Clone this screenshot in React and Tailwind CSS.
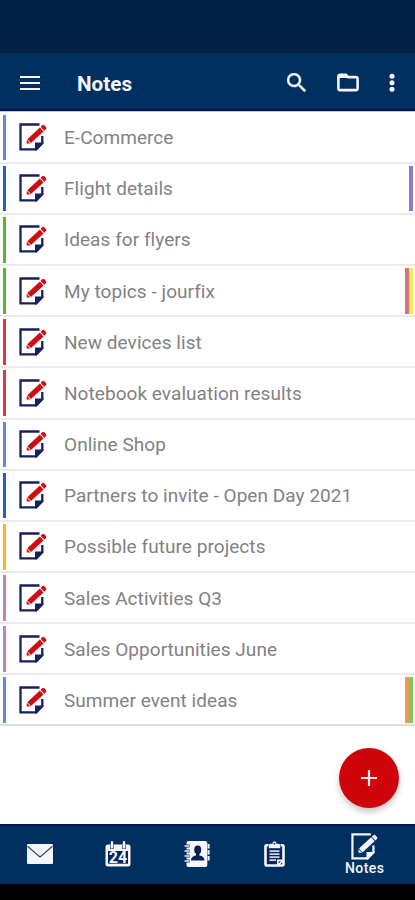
const notes = [
  { title: 'E-Commerce', color: 'bg-[#5b8fd0]' },
  { title: 'Flight details', color: 'bg-[#1f66b8]', tags: ['bg-[#8c7bd0]'] },
  { title: 'Ideas for flyers', color: 'bg-[#52bd1c]' },
  { title: 'My topics - jourfix', color: 'bg-[#52bd1c]', tags: ['bg-[#cf7480]', 'bg-[#f6ea50]'] },
  { title: 'New devices list', color: 'bg-[#e03545]' },
  { title: 'Notebook evaluation results', color: 'bg-[#e03545]' },
  { title: 'Online Shop', color: 'bg-[#5b8fd0]' },
  { title: 'Partners to invite - Open Day 2021', color: 'bg-[#1f66b8]' },
  { title: 'Possible future projects', color: 'bg-[#f8b81c]' },
  { title: 'Sales Activities Q3', color: 'bg-[#c283b6]' },
  { title: 'Sales Opportunities June', color: 'bg-[#c283b6]' },
  { title: 'Summer event ideas', color: 'bg-[#5b8fd0]', tags: ['bg-[#ef9a4e]', 'bg-[#78c95c]'] },
];

function NoteIcon({ paper, pencil, className }) {
  return (
    <svg viewBox="0 0 28 28" className={className}>
      <path d="M20.5 1.5H1.5V26.3H17L23.3 20V13" fill="none" stroke={paper} strokeWidth="2.3" />
      <path d="M16 27.4V19.6H24.4V20.5L17.7 27.4Z" fill={paper} />
      <g transform="translate(7.7 20.4) rotate(-43)" fill={pencil}>
        <path d="M0 0L2.6-2.6V2.6Z" />
        <rect x="3.3" y="-2.7" width="17.2" height="5.4" />
        <path d="M21.5-2.7H23.7Q25.2-2.7 25.2-1.2V1.2Q25.2 2.7 23.7 2.7H21.5Z" />
      </g>
    </svg>
  );
}

function Header() {
  return (
    <header className="flex h-[58px] shrink-0 items-center border-b-2 border-[#07125a] bg-[#003060] pt-1 text-[#f4f4fb]">
      <svg viewBox="0 0 20 14" className="ml-5 h-[14px] w-5" fill="currentColor">
        <path d="M0 0H20V2H0ZM0 6H20V8H0ZM0 12H20V14H0Z" />
      </svg>
      <h1 className="ml-[37px] pt-[2px] text-[20.7px] leading-6 font-bold">Notes</h1>
      <svg viewBox="3 3 17.49 17.49" className="mb-[2px] ml-auto h-[19px] w-[19px]" fill="currentColor" stroke="currentColor" strokeWidth=".4">
        <path d="M15.5 14h-.79l-.28-.27A6.47 6.47 0 0 0 16 9.5 6.5 6.5 0 1 0 9.5 16c1.61 0 3.09-.59 4.23-1.57l.27.28v.79l5 4.99L20.49 19l-4.99-5zm-6 0C7.01 14 5 11.99 5 9.5S7.01 5 9.5 5 14 7.01 14 9.5 11.99 14 9.5 14z" />
      </svg>
      <svg viewBox="0 0 22 18" className="mb-px ml-[31px] h-[19px] w-[22px]">
        <path d="M1.4 3V15Q1.4 16.6 3 16.6H19Q20.6 16.6 20.6 15V5Q20.6 3.6 19 3.6H11L9 1.4H3Q1.4 1.4 1.4 3Z" fill="none" stroke="currentColor" strokeWidth="2.6" />
        <path d="M2 1H9L11 4.5H2Z" fill="currentColor" />
      </svg>
      <svg viewBox="0 0 6 20" className="mr-5 ml-[30px] h-5 w-[6px]" fill="currentColor">
        <circle cx="3" cy="3.2" r="2.5" />
        <circle cx="3" cy="9.7" r="2.5" />
        <circle cx="3" cy="16.2" r="2.5" />
      </svg>
    </header>
  );
}

function NoteRow({ title, color, tags = [] }) {
  return (
    <li className="flex h-[51.17px] items-stretch border-b-2 border-[#ebebeb] pt-[2px] pr-[2px] pb-[1.5px] pl-[3px] last:border-[#dedede]">
      <span className={`w-[3px] ${color}`} />
      <NoteIcon paper="#16205f" pencil="#cf0c12" className="mt-[8.5px] ml-[13px] h-7 w-7" />
      <span className="ml-[17px] self-center pt-[1.5px] text-[19px] leading-6 font-normal tracking-[0.055px] whitespace-nowrap text-[#828282]">{title}</span>
      <span className="ml-auto flex">
        {tags.map((tag) => (
          <span key={tag} className={`w-1 ${tag}`} />
        ))}
      </span>
    </li>
  );
}

function CalendarIcon() {
  return (
    <svg viewBox="0 0 26 26" className="h-[26px] w-[26px]">
      <path d="M3 3.5H23Q25.5 3.5 25.5 6V23Q25.5 25.5 23 25.5H3Q.5 25.5 .5 23V6Q.5 3.5 3 3.5Z" fill="#f5f5fc" />
      <rect x="3" y="10" width="20" height="12.7" fill="#0b2358" />
      <path d="M7 3.5V8M19 3.5V8" stroke="#49608c" strokeWidth="4" />
      <path d="M7 1.2V6.3M19 1.2V6.3" stroke="#f5f5fc" strokeWidth="2.4" strokeLinecap="round" />
      <text x="13" y="22" textAnchor="middle" fontFamily="Roboto" fontSize="16" fontWeight="700" fill="#f5f5fc">24</text>
    </svg>
  );
}

function ContactsIcon() {
  return (
    <svg viewBox="0 0 26 26" className="h-[26px] w-[26px]">
      <rect x="2.5" y="0" width="20.8" height="26" rx="2" fill="#f5f5fc" />
      <path d="M0 5H5.5M0 10H5.5M0 15H5.5M0 20H5.5" stroke="#0b2358" strokeWidth="3" />
      <path d="M.5 5H5M.5 10H5M.5 15H5M.5 20H5" stroke="#f5f5fc" strokeWidth="1.7" />
      <path d="M24.6 3V7.4M24.6 9V13.4M24.6 15V19.4" stroke="#f5f5fc" strokeWidth="2" />
      <ellipse cx="13.7" cy="8.8" rx="3.5" ry="4.4" fill="#062250" />
      <path d="M12 12H15.4V14.5Q20.5 15.3 20.5 19.5H7Q7 15.3 12 14.5Z" fill="#062250" />
    </svg>
  );
}

function TasksIcon() {
  return (
    <svg viewBox="0 0 21 26" className="h-[26px] w-[21px]">
      <rect x="1.5" y="4.3" width="18" height="20.2" rx="1" fill="#0b2358" stroke="#f5f5fc" strokeWidth="2.6" />
      <path d="M4.5 7.5V4Q4.5 2.5 7 2.5H8.3Q8.5 0 10.5 0T12.7 2.5H14Q16.5 2.5 16.5 4V7.5Z" fill="#f5f5fc" stroke="#003060" strokeWidth=".6" />
      <circle cx="10.5" cy="2.7" r=".9" fill="#003060" />
      <path d="M5.5 10.2H15.5M5.5 13.2H15.5M5.5 16.2H15.5M5.5 19.2H12" stroke="#cdd4e4" strokeWidth="1.7" />
      <path d="M13 24.5V18.5H19.5V20L15 24.5Z" fill="#f5f5fc" />
      <path d="M14.6 22.5V20.2H17Z" fill="#0b2358" />
    </svg>
  );
}

function BottomNav() {
  return (
    <nav className="flex h-[60px] shrink-0 items-center border-t-2 border-[#0a1558] bg-[#003060] pl-[27px] text-[#f5f5fc]">
      <svg viewBox="0 0 26 20" className="mb-[2px] h-5 w-[26px]">
        <rect width="26" height="20" rx="1" fill="currentColor" />
        <path d="M.5 2.2L13 13L25.5 2.2" fill="none" stroke="#304678" strokeWidth="1.2" />
      </svg>
      <div className="mb-[2px] ml-[52px]"><CalendarIcon /></div>
      <div className="mb-[2px] ml-[53px]"><ContactsIcon /></div>
      <div className="mb-[2px] ml-[54px]"><TasksIcon /></div>
      <div className="mb-[2px] ml-[60px] flex flex-col items-center">
        <NoteIcon paper="#f5f5fc" pencil="#f5f5fc" className="h-[27px] w-[27px]" />
        <span className="text-[14px] leading-4 font-medium tracking-[0.4px]">Notes</span>
      </div>
    </nav>
  );
}

export default function App() {
  return (
    <div className="relative flex h-[900px] w-[415px] flex-col overflow-hidden bg-white font-['Roboto',sans-serif]">
      <div className="h-[53px] shrink-0 bg-[#012142]" />
      <Header />
      <main className="flex-1 border-t border-[#c9c9d6] pt-[0.6px]">
        <ul>
          {notes.map((note) => (
            <NoteRow key={note.title} {...note} />
          ))}
        </ul>
      </main>
      <BottomNav />
      <div className="h-4 shrink-0 bg-black" />
      <button aria-label="Add note" className="absolute top-[748px] left-[339px] flex h-[60px] w-[60px] items-center justify-center rounded-full bg-[#cf040b] shadow-[0_4px_6px_rgba(0,0,0,0.22)]">
        <svg viewBox="0 0 16 16" className="h-4 w-4">
          <path d="M8 0V16M0 8H16" stroke="#ffe9e9" strokeWidth="2.2" />
        </svg>
      </button>
    </div>
  );
}
